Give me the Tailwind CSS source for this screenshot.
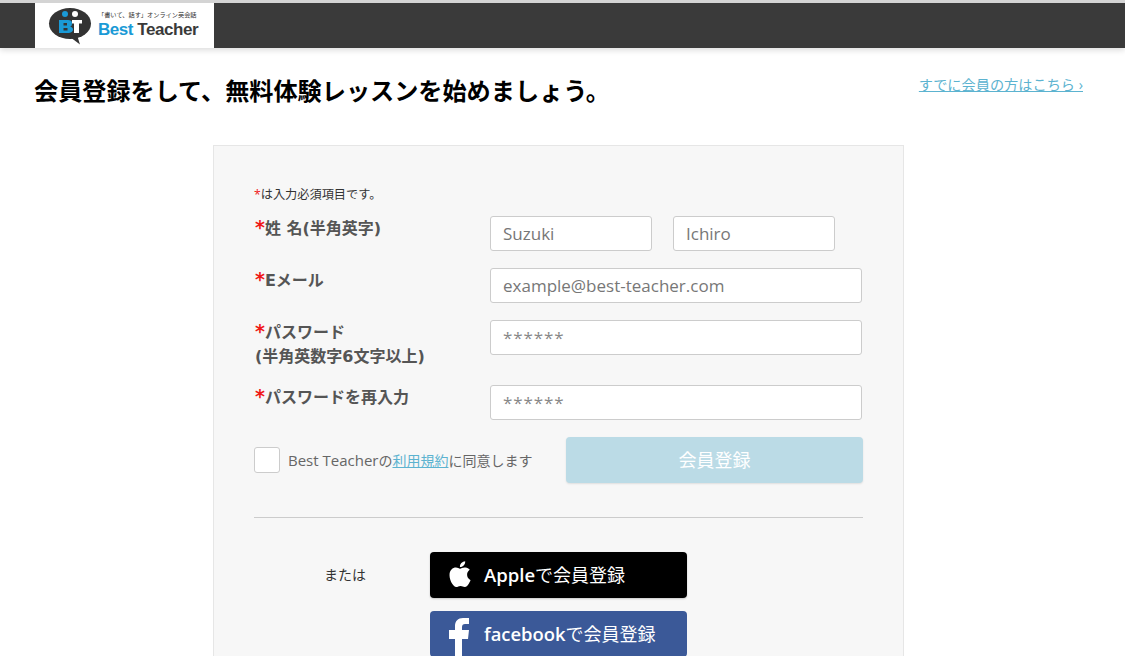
<!DOCTYPE html>
<html lang="ja">
<head>
  <meta charset="UTF-8" />
  <title>Best Teacher</title>
  <script src="https://cdn.jsdelivr.net/npm/@tailwindcss/browser@4"></script>
</head>
<body class="bg-white h-[656px] overflow-hidden font-['Open_Sans','Noto_Sans_CJK_JP',sans-serif]">
  <header class="h-[48px] bg-[#3a3a3a] border-t-[3px] border-[#d4d4d4] shadow-[0_2px_6px_rgba(0,0,0,0.15)] pl-[35px]">
    <div class="w-[179px] h-[45px] bg-white flex items-start pl-[13px] pt-[2px]">
      <svg width="46" height="42" viewBox="0 0 46 42" class="mr-[4px] shrink-0">
        <ellipse cx="22" cy="18.5" rx="21" ry="15.5" fill="#333"/>
        <path d="M22 32 L32 39.5 L29 30 Z" fill="#333"/>
        <circle cx="17" cy="9" r="3" fill="#1a9ad6"/>
        <circle cx="27" cy="9" r="3" fill="#fff"/>
        <path d="M11 15h9q4 0 4 3.300t-2 3.200q3 .8 3 3.200t-4 3.300H11Z M15.500 18v2.500h3.500v-2.500Z M15.500 23v2.500h4v-2.500Z" fill="#1a9ad6" fill-rule="evenodd"/>
        <path d="M24 15h10v3.500h-3V28h-5V18.500h-2Z" fill="#fff"/>
      </svg>
      <div class="flex flex-col pt-[5px]">
        <span class="text-[6.2px] leading-[10px] text-[#333] whitespace-nowrap">「書いて、話す」オンライン英会話</span>
        <span class="text-[17px] leading-[20px] font-['Liberation_Sans'] font-bold tracking-[-0.45px] whitespace-nowrap"><span class="text-[#1a9ad6]">Best</span> <span class="text-[#3a3a3a]">Teacher</span></span>
      </div>
    </div>
  </header>

  <div class="flex justify-between pl-[34px] pr-[42px] pt-[24px] h-[97px]">
    <h1 class="text-[24.15px] leading-[38px] font-bold text-black">会員登録をして、無料体験レッスンを始めましょう。</h1>
    <a href="#" class="text-[14.2px] leading-[26px] text-[#5cb3d0] underline">すでに会員の方はこちら ›</a>
  </div>

  <main class="w-[691px] ml-[213px] h-[520px] bg-[#f7f7f7] border border-[#e6e6e6] pl-[40px] pr-[40px] pt-[40px]">
    <p class="text-[12.2px] leading-[17px] text-[#333] mb-[13px]"><span class="text-[#f01818]">*</span>は入力必須項目です。</p>

    <div class="flex mb-[17px]">
      <label class="w-[237px] mt-[-1px] pl-[1px] text-[16px] leading-[24px] font-bold text-[#555] font-['DejaVu_Sans','Noto_Sans_CJK_JP',sans-serif]"><span class="text-[#f01818] text-[19px]">*</span>姓 名(半角英字)</label>
      <div class="flex gap-[21px] ml-[-1px]">
        <input placeholder="Suzuki" class="w-[162px] h-[35px] bg-white border border-[#ccc] rounded-[3px] px-[12px] text-[17px] placeholder:text-[#777]" />
        <input placeholder="Ichiro" class="w-[162px] h-[35px] bg-white border border-[#ccc] rounded-[3px] px-[12px] text-[17px] placeholder:text-[#777]" />
      </div>
    </div>

    <div class="flex mb-[17px]">
      <label class="w-[237px] mt-[-1px] pl-[1px] text-[16px] leading-[24px] font-bold text-[#555] font-['DejaVu_Sans','Noto_Sans_CJK_JP',sans-serif]"><span class="text-[#f01818] text-[19px]">*</span>Eメール</label>
      <input placeholder="example@best-teacher.com" class="w-[372px] h-[35px] ml-[-1px] bg-white border border-[#ccc] rounded-[3px] px-[12px] text-[17px] placeholder:text-[#777]" />
    </div>

    <div class="flex h-[65px]">
      <label class="w-[237px] mt-[-1px] pl-[1px] text-[16px] leading-[24px] font-bold text-[#555] font-['DejaVu_Sans','Noto_Sans_CJK_JP',sans-serif]"><span class="text-[#f01818] text-[19px]">*</span>パスワード<br />(半角英数字6文字以上)</label>
      <input placeholder="******" class="w-[372px] h-[35px] ml-[-1px] bg-white border border-[#ccc] rounded-[3px] px-[12px] text-[17px] tracking-[0.9px] placeholder:text-[#888]" />
    </div>

    <div class="flex mb-[17px]">
      <label class="w-[237px] mt-[-1px] pl-[1px] text-[16px] leading-[24px] font-bold text-[#555] font-['DejaVu_Sans','Noto_Sans_CJK_JP',sans-serif]"><span class="text-[#f01818] text-[19px]">*</span>パスワードを再入力</label>
      <input placeholder="******" class="w-[372px] h-[35px] ml-[-1px] bg-white border border-[#ccc] rounded-[3px] px-[12px] text-[17px] tracking-[0.9px] placeholder:text-[#888]" />
    </div>

    <div class="flex items-center justify-between w-[609px] pb-[34px] border-b border-[#ccc]">
      <div class="flex items-center">
        <span class="w-[26px] h-[26px] bg-white border border-[#ccc] rounded-[3px] mr-[8px]"></span>
        <span class="text-[14px] text-[#666] pt-[1px]"><span class="text-[15px]">Best Teacher</span>の<a href="#" class="text-[#5cb3d0] underline">利用規約</a>に同意します</span>
      </div>
      <button class="w-[297px] h-[46px] bg-[#bbdbe6] rounded-[4px] text-white text-[18px] shadow-[0_1px_2px_rgba(0,0,0,0.1)]">会員登録</button>
    </div>

    <div class="flex mt-[34px]">
      <span class="w-[176px] pl-[70px] h-[46px] text-[14px] leading-[46px] text-[#333]">または</span>
      <div class="flex flex-col gap-[13px]">
        <a href="#" class="w-[257px] h-[46px] bg-black rounded-[4px] flex items-center text-white text-[18px] shadow-[0_1px_2px_rgba(0,0,0,0.2)]">
          <svg width="22" height="26" viewBox="0 0 814 1000" class="ml-[19px] mr-[14px] mt-[-2px]" fill="#fff"><path d="M788 341c-6 4-108 62-108 190 0 149 130 201 134 202-1 3-21 72-69 142-42 62-87 123-155 123s-85-39-163-39c-76 0-103 41-165 41s-106-57-155-127C50 791 4 666 4 546c0-191 124-293 246-293 65 0 119 43 160 43 39 0 100-45 174-45 28 0 129 3 204 90zM555 164c31-36 52-87 52-138 0-7-1-14-2-20-50 2-110 33-146 75-28 32-55 83-55 135 0 8 1 16 2 18 3 1 8 1 13 1 45 0 102-30 136-71z"/></svg>
          <span class="ml-[-1px]"><span class="font-semibold text-[18.5px]">Apple</span>で会員登録</span>
        </a>
        <a href="#" class="w-[257px] h-[46px] bg-[#3b5998] rounded-[4px] flex items-center text-white text-[18px] overflow-hidden">
          <svg width="20" height="38" viewBox="0 0 20 38" class="ml-[19px] mr-[15px] self-start mt-[7px]" fill="#fff"><path d="M6 38V21H0v-9h6V8c0-5 3-8 8-8h6v6h-4c-2 0-3 1-3 3v3h7l-1 9h-6v17Z"/></svg>
          <span><span class="font-semibold text-[18.4px]">facebook</span>で会員登録</span>
        </a>
      </div>
    </div>
  </main>
</body>
</html>
